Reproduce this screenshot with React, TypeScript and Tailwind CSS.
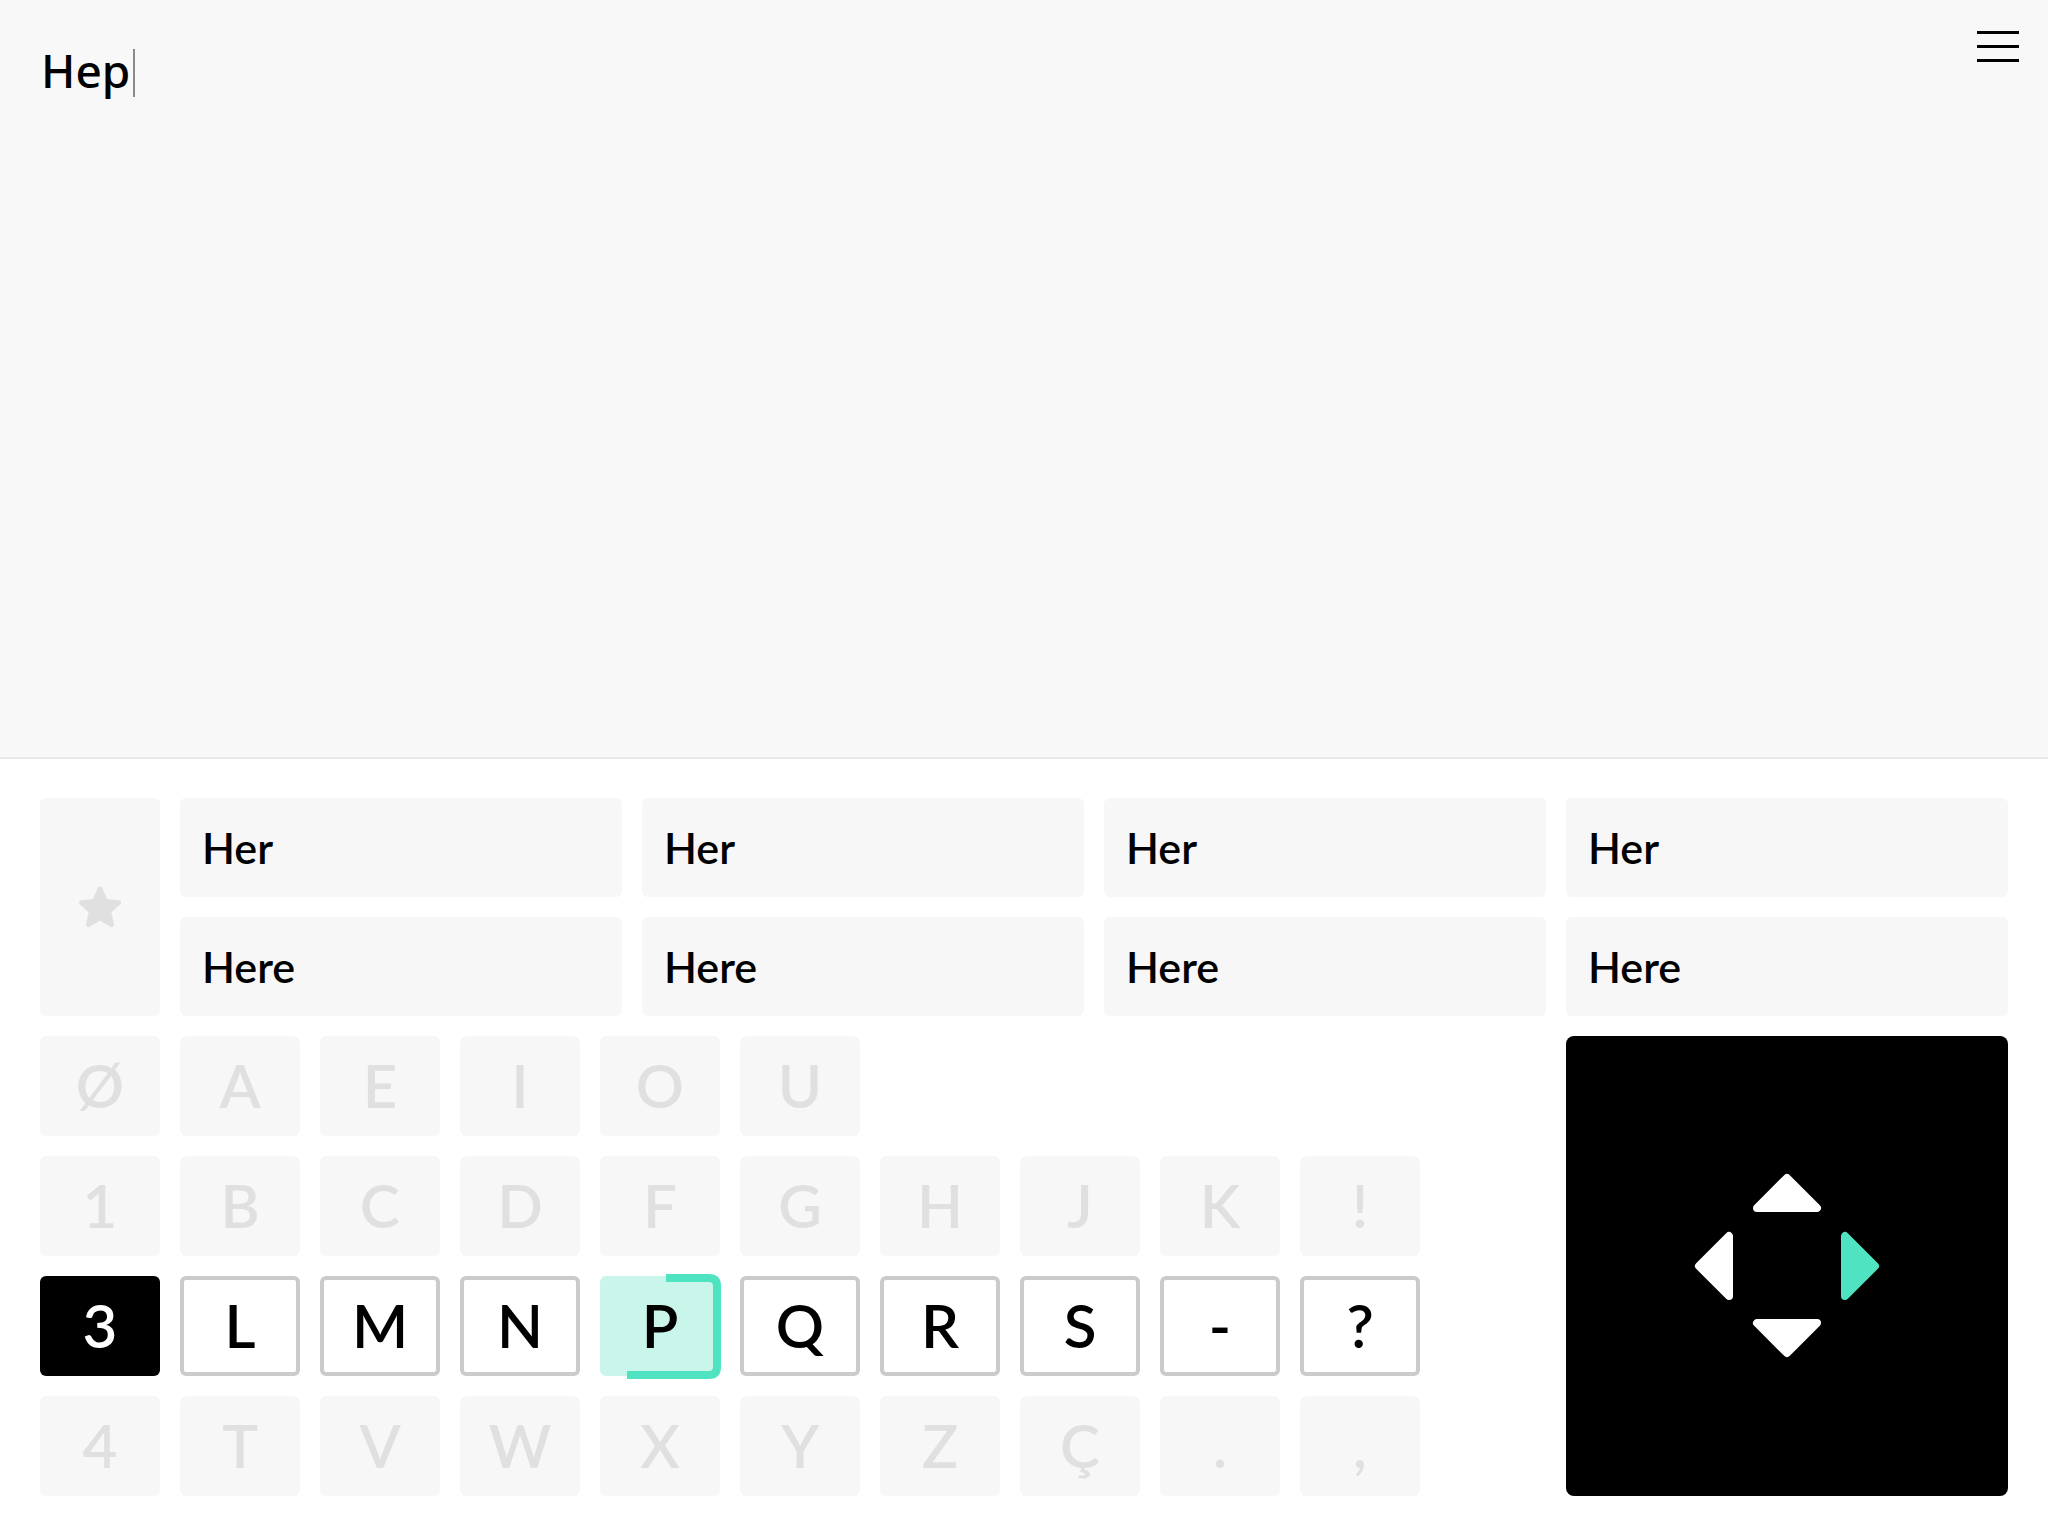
import { Fragment } from 'react'

const font = { fontFamily: 'Lato, "Open Sans", sans-serif' }

const rows: string[][] = [
    ['Ø', 'A', 'E', 'I', 'O', 'U'],
    ['1', 'B', 'C', 'D', 'F', 'G', 'H', 'J', 'K', '!'],
    ['3', 'L', 'M', 'N', 'P', 'Q', 'R', 'S', '-', '?'],
    ['4', 'T', 'V', 'W', 'X', 'Y', 'Z', 'Ç', '.', ','],
]

const ACTIVE_ROW = 2

function StarIcon() {
    return (
        <svg width="52" height="50" viewBox="0 0 52 50" className="mt-[3px]">
            <polygon
                points="26,5 31.4,17.5 44.5,18.7 34.6,27.4 37.5,40.5 26,33.7 14.5,40.5 17.4,27.4 7.5,18.7 20.6,17.5"
                fill="#e0e0e0"
                stroke="#e0e0e0"
                strokeWidth="5"
                strokeLinejoin="round"
            />
        </svg>
    )
}

function Key({ label, row, col }: { label: string; row: number; col: number }) {
    const base =
        'relative h-[100px] w-[120px] rounded-[6px] flex items-center justify-center pb-[3px] text-[60px] font-semibold leading-none'

    if (row !== ACTIVE_ROW) {
        return (
            <div className={`${base} bg-[#f7f7f7] text-[#e0e0e0]`} style={font}>
                {label}
            </div>
        )
    }

    if (col === 0) {
        return (
            <div className={`${base} bg-black text-white`} style={font}>
                {label}
            </div>
        )
    }

    if (label === 'P') {
        return (
            <div className={`${base} bg-[#c9f5ea] text-black`} style={font}>
                {label}
                {/* selection progress frame */}
                <svg
                    className="absolute -left-1 -top-1"
                    width="128"
                    height="108"
                    viewBox="0 0 128 108"
                    fill="none"
                >
                    <path
                        d="M70 6 H113 Q121 6 121 14 V95 Q121 103 113 103 H31"
                        stroke="#50e3c2"
                        strokeWidth="8"
                    />
                </svg>
            </div>
        )
    }

    return (
        <div className={`${base} bg-white border-4 border-[#cbcbcb] text-black`} style={font}>
            {label}
        </div>
    )
}

function DPad() {
    return (
        <svg width="200" height="200" viewBox="0 0 200 200">
            <g strokeWidth="8" strokeLinejoin="round">
                <polygon points="100,12 130,42 70,42" fill="#fff" stroke="#fff" />
                <polygon points="70,157 130,157 100,187" fill="#fff" stroke="#fff" />
                <polygon points="12,100 42,70 42,130" fill="#fff" stroke="#fff" />
                <polygon points="158,70 158,130 188,100" fill="#50e3c2" stroke="#50e3c2" />
            </g>
        </svg>
    )
}

function App() {
    const candidates = ['Her', 'Her', 'Her', 'Her', 'Here', 'Here', 'Here', 'Here']

    return (
        <div className="h-screen flex flex-col bg-white">
            <div className="h-[757px] shrink-0 bg-[#f8f8f8] border-b-2 border-[#e8e8e8] box-content flex justify-between">
                <div className="pl-[41px] pt-[47px] flex items-start">
                    <span
                        className="text-[46px] font-medium leading-none text-black"
                        style={{ fontFamily: '"Noto Sans", sans-serif' }}
                    >
                        Hep
                    </span>
                    <span className="ml-[3px] mt-[2px] w-[2px] h-[48px] bg-[#8a8a8a]" />
                </div>
                <div className="pr-[29px] pt-[31px] flex flex-col gap-[11px]">
                    <div className="w-[42px] h-[3px] bg-black" />
                    <div className="w-[42px] h-[3px] bg-black" />
                    <div className="w-[42px] h-[3px] bg-black" />
                </div>
            </div>

            <div className="px-10 pt-[39px] flex flex-col gap-5">
                <div className="flex gap-5 h-[218px]">
                    <div className="w-[120px] shrink-0 rounded-[6px] bg-[#f7f7f7] flex items-center justify-center">
                        <StarIcon />
                    </div>
                    <div className="flex-1 grid grid-cols-4 grid-rows-2 gap-x-5 gap-y-5">
                        {candidates.map((c, i) => (
                            <div
                                key={i}
                                className="rounded-[6px] bg-[#f7f7f7] flex items-center px-[22px] text-[43px] font-semibold leading-none text-black"
                                style={font}
                            >
                                {c}
                            </div>
                        ))}
                    </div>
                </div>

                <div className="flex justify-between">
                    <div className="grid grid-cols-[repeat(10,120px)] grid-rows-[repeat(4,100px)] gap-5">
                        {rows.map((r, ri) => (
                            <Fragment key={ri}>
                                {r.map((k, ci) => (
                                    <Key key={ci} label={k} row={ri} col={ci} />
                                ))}
                                {Array.from({ length: 10 - r.length }).map((_, j) => (
                                    <div key={`e${j}`} />
                                ))}
                            </Fragment>
                        ))}
                    </div>
                    <div className="w-[442px] h-[460px] rounded-[8px] bg-black flex items-center justify-center">
                        <DPad />
                    </div>
                </div>
            </div>
        </div>
    )
}

export default App
